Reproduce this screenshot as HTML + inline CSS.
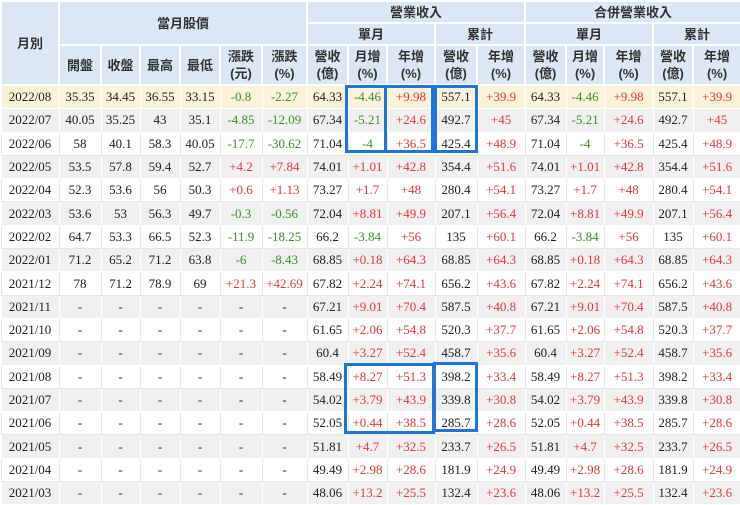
<!DOCTYPE html><html><head><meta charset="utf-8"><style>
body{margin:0;width:740px;height:500px;overflow:hidden;background:#fff;position:relative}
table{border-collapse:collapse;table-layout:fixed;width:740px;position:absolute;left:0;top:0}
th{background:#dbe7f4;border:2px solid #fff;font:bold 13px "Liberation Sans","Noto Sans CJK TC",sans-serif;color:#333;padding:0;text-align:center;line-height:17px}
td{font:13px "Liberation Serif","Noto Serif CJK SC",serif;color:#222;text-align:center;padding:0;height:22.3px;line-height:16px;border:1px solid #e6e6e6;white-space:nowrap}
tr.y td{background:#fbf3d9;border-color:#fff}
tr.e td{background:#f0f0f0;border-color:#fff}
.g{color:#3c8f2c}.r{color:#e2383c}
.b{position:absolute;border:3px solid #1f74e0;box-sizing:border-box}
</style></head><body>
<table>
<colgroup><col style="width:58px"><col style="width:42px"><col style="width:39px"><col style="width:40px"><col style="width:40px"><col style="width:42px"><col style="width:45px"><col style="width:41px"><col style="width:39px"><col style="width:48px"><col style="width:42px"><col style="width:48px"><col style="width:41px"><col style="width:38px"><col style="width:49px"><col style="width:40px"><col style="width:48px"></colgroup>
<tr style="height:22px"><th rowspan="3">月別</th><th colspan="6" rowspan="2">當月股價</th><th colspan="5">營業收入</th><th colspan="5">合併營業收入</th></tr>
<tr style="height:22px"><th colspan="3">單月</th><th colspan="2">累計</th><th colspan="3">單月</th><th colspan="2">累計</th></tr>
<tr style="height:40px"><th>開盤</th><th>收盤</th><th>最高</th><th>最低</th><th>漲跌<br>(元)</th><th>漲跌<br>(%)</th><th>營收<br>(億)</th><th>月增<br>(%)</th><th>年增<br>(%)</th><th>營收<br>(億)</th><th>年增<br>(%)</th><th>營收<br>(億)</th><th>月增<br>(%)</th><th>年增<br>(%)</th><th>營收<br>(億)</th><th>年增<br>(%)</th></tr>
<tr class="y"><td>2022/08</td><td>35.35</td><td>34.45</td><td>36.55</td><td>33.15</td><td class="g">-0.8</td><td class="g">-2.27</td><td>64.33</td><td class="g">-4.46</td><td class="r">+9.98</td><td>557.1</td><td class="r">+39.9</td><td>64.33</td><td class="g">-4.46</td><td class="r">+9.98</td><td>557.1</td><td class="r">+39.9</td></tr>
<tr class="e"><td>2022/07</td><td>40.05</td><td>35.25</td><td>43</td><td>35.1</td><td class="g">-4.85</td><td class="g">-12.09</td><td>67.34</td><td class="g">-5.21</td><td class="r">+24.6</td><td>492.7</td><td class="r">+45</td><td>67.34</td><td class="g">-5.21</td><td class="r">+24.6</td><td>492.7</td><td class="r">+45</td></tr>
<tr><td>2022/06</td><td>58</td><td>40.1</td><td>58.3</td><td>40.05</td><td class="g">-17.7</td><td class="g">-30.62</td><td>71.04</td><td class="g">-4</td><td class="r">+36.5</td><td>425.4</td><td class="r">+48.9</td><td>71.04</td><td class="g">-4</td><td class="r">+36.5</td><td>425.4</td><td class="r">+48.9</td></tr>
<tr class="e"><td>2022/05</td><td>53.5</td><td>57.8</td><td>59.4</td><td>52.7</td><td class="r">+4.2</td><td class="r">+7.84</td><td>74.01</td><td class="r">+1.01</td><td class="r">+42.8</td><td>354.4</td><td class="r">+51.6</td><td>74.01</td><td class="r">+1.01</td><td class="r">+42.8</td><td>354.4</td><td class="r">+51.6</td></tr>
<tr><td>2022/04</td><td>52.3</td><td>53.6</td><td>56</td><td>50.3</td><td class="r">+0.6</td><td class="r">+1.13</td><td>73.27</td><td class="r">+1.7</td><td class="r">+48</td><td>280.4</td><td class="r">+54.1</td><td>73.27</td><td class="r">+1.7</td><td class="r">+48</td><td>280.4</td><td class="r">+54.1</td></tr>
<tr class="e"><td>2022/03</td><td>53.6</td><td>53</td><td>56.3</td><td>49.7</td><td class="g">-0.3</td><td class="g">-0.56</td><td>72.04</td><td class="r">+8.81</td><td class="r">+49.9</td><td>207.1</td><td class="r">+56.4</td><td>72.04</td><td class="r">+8.81</td><td class="r">+49.9</td><td>207.1</td><td class="r">+56.4</td></tr>
<tr><td>2022/02</td><td>64.7</td><td>53.3</td><td>66.5</td><td>52.3</td><td class="g">-11.9</td><td class="g">-18.25</td><td>66.2</td><td class="g">-3.84</td><td class="r">+56</td><td>135</td><td class="r">+60.1</td><td>66.2</td><td class="g">-3.84</td><td class="r">+56</td><td>135</td><td class="r">+60.1</td></tr>
<tr class="e"><td>2022/01</td><td>71.2</td><td>65.2</td><td>71.2</td><td>63.8</td><td class="g">-6</td><td class="g">-8.43</td><td>68.85</td><td class="r">+0.18</td><td class="r">+64.3</td><td>68.85</td><td class="r">+64.3</td><td>68.85</td><td class="r">+0.18</td><td class="r">+64.3</td><td>68.85</td><td class="r">+64.3</td></tr>
<tr><td>2021/12</td><td>78</td><td>71.2</td><td>78.9</td><td>69</td><td class="r">+21.3</td><td class="r">+42.69</td><td>67.82</td><td class="r">+2.24</td><td class="r">+74.1</td><td>656.2</td><td class="r">+43.6</td><td>67.82</td><td class="r">+2.24</td><td class="r">+74.1</td><td>656.2</td><td class="r">+43.6</td></tr>
<tr class="e"><td>2021/11</td><td>-</td><td>-</td><td>-</td><td>-</td><td>-</td><td>-</td><td>67.21</td><td class="r">+9.01</td><td class="r">+70.4</td><td>587.5</td><td class="r">+40.8</td><td>67.21</td><td class="r">+9.01</td><td class="r">+70.4</td><td>587.5</td><td class="r">+40.8</td></tr>
<tr><td>2021/10</td><td>-</td><td>-</td><td>-</td><td>-</td><td>-</td><td>-</td><td>61.65</td><td class="r">+2.06</td><td class="r">+54.8</td><td>520.3</td><td class="r">+37.7</td><td>61.65</td><td class="r">+2.06</td><td class="r">+54.8</td><td>520.3</td><td class="r">+37.7</td></tr>
<tr class="e"><td>2021/09</td><td>-</td><td>-</td><td>-</td><td>-</td><td>-</td><td>-</td><td>60.4</td><td class="r">+3.27</td><td class="r">+52.4</td><td>458.7</td><td class="r">+35.6</td><td>60.4</td><td class="r">+3.27</td><td class="r">+52.4</td><td>458.7</td><td class="r">+35.6</td></tr>
<tr><td>2021/08</td><td>-</td><td>-</td><td>-</td><td>-</td><td>-</td><td>-</td><td>58.49</td><td class="r">+8.27</td><td class="r">+51.3</td><td>398.2</td><td class="r">+33.4</td><td>58.49</td><td class="r">+8.27</td><td class="r">+51.3</td><td>398.2</td><td class="r">+33.4</td></tr>
<tr class="e"><td>2021/07</td><td>-</td><td>-</td><td>-</td><td>-</td><td>-</td><td>-</td><td>54.02</td><td class="r">+3.79</td><td class="r">+43.9</td><td>339.8</td><td class="r">+30.8</td><td>54.02</td><td class="r">+3.79</td><td class="r">+43.9</td><td>339.8</td><td class="r">+30.8</td></tr>
<tr><td>2021/06</td><td>-</td><td>-</td><td>-</td><td>-</td><td>-</td><td>-</td><td>52.05</td><td class="r">+0.44</td><td class="r">+38.5</td><td>285.7</td><td class="r">+28.6</td><td>52.05</td><td class="r">+0.44</td><td class="r">+38.5</td><td>285.7</td><td class="r">+28.6</td></tr>
<tr class="e"><td>2021/05</td><td>-</td><td>-</td><td>-</td><td>-</td><td>-</td><td>-</td><td>51.81</td><td class="r">+4.7</td><td class="r">+32.5</td><td>233.7</td><td class="r">+26.5</td><td>51.81</td><td class="r">+4.7</td><td class="r">+32.5</td><td>233.7</td><td class="r">+26.5</td></tr>
<tr><td>2021/04</td><td>-</td><td>-</td><td>-</td><td>-</td><td>-</td><td>-</td><td>49.49</td><td class="r">+2.98</td><td class="r">+28.6</td><td>181.9</td><td class="r">+24.9</td><td>49.49</td><td class="r">+2.98</td><td class="r">+28.6</td><td>181.9</td><td class="r">+24.9</td></tr>
<tr class="e"><td>2021/03</td><td>-</td><td>-</td><td>-</td><td>-</td><td>-</td><td>-</td><td>48.06</td><td class="r">+13.2</td><td class="r">+25.5</td><td>132.4</td><td class="r">+23.6</td><td>48.06</td><td class="r">+13.2</td><td class="r">+25.5</td><td>132.4</td><td class="r">+23.6</td></tr>
</table>
<div class="b" style="left:345px;top:85px;width:42px;height:68px"></div>
<div class="b" style="left:384px;top:85px;width:50px;height:68px"></div>
<div class="b" style="left:434px;top:85px;width:44px;height:68px"></div>
<div class="b" style="left:344px;top:363px;width:91px;height:71px"></div>
<div class="b" style="left:433px;top:362px;width:45px;height:70px"></div>
</body></html>
